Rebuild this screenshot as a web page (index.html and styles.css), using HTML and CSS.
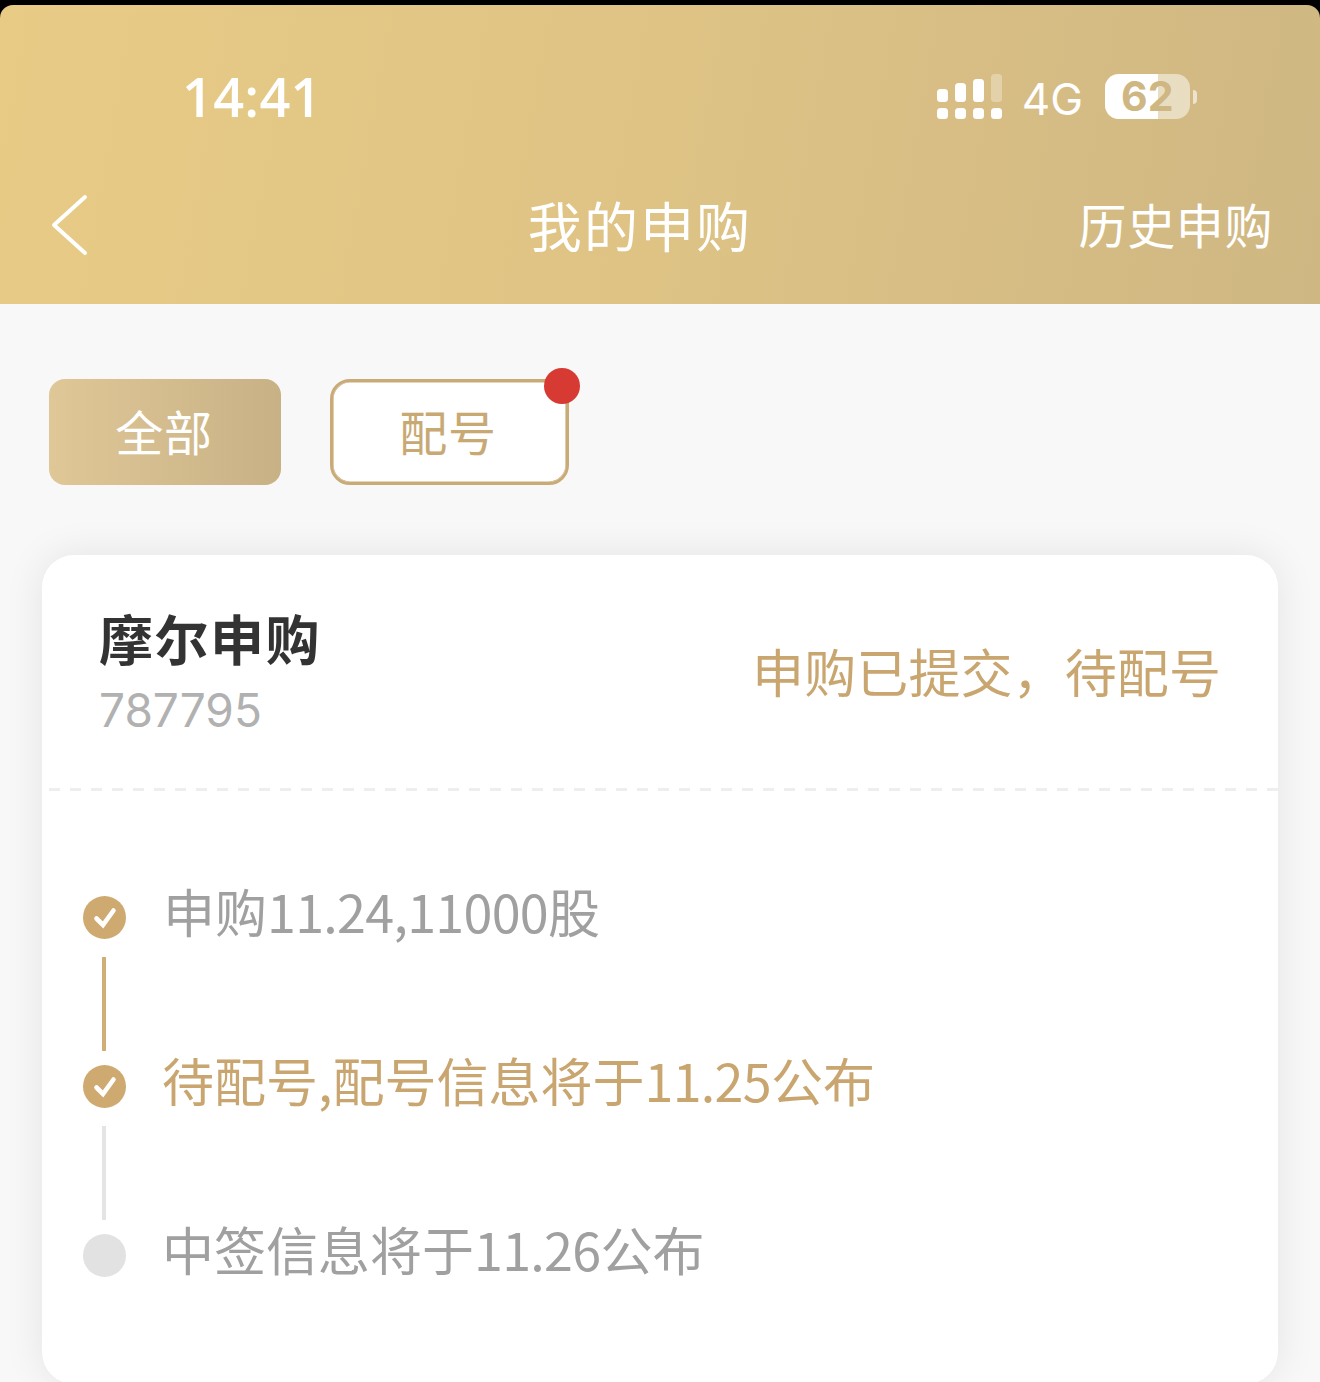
FILE: index.html
```html
<!DOCTYPE html>
<html lang="zh">
<head>
<meta charset="utf-8">
<title>我的申购</title>
<link rel="stylesheet" href="styles.css">
</head>
<body>
<div class="screen">
  <header class="header">
    <div class="status">
      <span class="time">14:41</span>
      <div class="status-right">
        <svg class="signal" width="66" height="46" viewBox="0 0 66 46">
          <g fill="#fff">
            <rect x="0" y="15" width="11" height="13" rx="3.5"/>
            <rect x="18" y="9" width="11" height="19" rx="3.5"/>
            <rect x="36" y="5" width="11" height="23" rx="3.5"/>
            <rect x="54" y="0" width="11" height="28" rx="3.5" opacity=".3"/>
            <rect x="0" y="34" width="11" height="11" rx="3.5"/>
            <rect x="18" y="34" width="11" height="11" rx="3.5"/>
            <rect x="36" y="34" width="11" height="11" rx="3.5"/>
            <rect x="54" y="34" width="11" height="11" rx="3.5"/>
          </g>
        </svg>
        <span class="net">4G</span>
        <div class="battery">
          <div class="battery-body">
            <div class="battery-fill"></div>
            <span class="battery-num">62</span>
          </div>
          <span class="battery-cap"></span>
        </div>
      </div>
    </div>
    <nav class="nav">
      <svg class="back" width="38" height="64" viewBox="0 0 38 64"><path d="M34 3 L3 31 L34 59" fill="none" stroke="#fff" stroke-width="4" stroke-linecap="round" stroke-linejoin="round"/></svg>
      <h1 class="title">我的申购</h1>
      <a class="history">历史申购</a>
    </nav>
  </header>
  <main class="main">
    <div class="tabs">
      <button class="tab tab-active">全部</button>
      <button class="tab tab-outline">配号<span class="dot"></span></button>
    </div>
    <section class="card">
      <div class="card-head">
        <div class="stock">
          <div class="stock-name">摩尔申购</div>
          <div class="stock-code">787795</div>
        </div>
        <div class="stock-state">申购已提交，待配号</div>
      </div>
      <div class="dashes"></div>
      <ol class="steps">
        <li class="step step-gone">
          <span class="mark mark-done"><svg width="43" height="43" viewBox="0 0 43 43"><path d="M13.5 22.5 L20 29 L30.5 14.5" fill="none" stroke="#fff" stroke-width="4.6" stroke-linecap="round" stroke-linejoin="miter"/></svg></span>
          <span class="step-text">申购<span class="num">11.24,11000</span>股</span>
        </li>
        <li class="rail rail-on"></li>
        <li class="step step-now">
          <span class="mark mark-done"><svg width="43" height="43" viewBox="0 0 43 43"><path d="M13.5 22.5 L20 29 L30.5 14.5" fill="none" stroke="#fff" stroke-width="4.6" stroke-linecap="round" stroke-linejoin="miter"/></svg></span>
          <span class="step-text step-shift">待配号,配号信息将于<span class="num">11.25</span>公布</span>
        </li>
        <li class="rail rail-off"></li>
        <li class="step step-gone">
          <span class="mark mark-todo"></span>
          <span class="step-text step-shift">中签信息将于<span class="num">11.26</span>公布</span>
        </li>
      </ol>
    </section>
  </main>
</div>
</body>
</html>
```
FILE: styles.css
```css
* { box-sizing: border-box; margin: 0; padding: 0; }
html, body { width: 1320px; height: 1382px; overflow: hidden; background: #000; }
body { font-family: "Noto Sans CJK SC", "Noto Sans", sans-serif; }
.screen { height: 1382px; padding-top: 5px; background: #000; overflow: hidden; }
.header {
  height: 299px;
  background: linear-gradient(100deg, #e8cb85 0%, #dec385 50%, #cfb783 100%);
  border-radius: 13px 13px 0 0;
  color: #fff;
}
.status { height: 186px; padding: 59px 123px 0 182px; display: flex; justify-content: space-between; align-items: flex-start; }
.time { font-family: "Open Sans", sans-serif; font-size: 54px; font-weight: 600; line-height: 64px; letter-spacing: .3px; }
.status-right { display: flex; align-items: flex-start; padding-top: 10px; }
.signal { margin-right: 19px; }
.net { font-family: "Inter", sans-serif; font-size: 44px; font-weight: 400; line-height: 52px; margin-top: -1px; margin-right: 22px; }
.battery { display: flex; align-items: center; height: 45px; }
.battery-body { position: relative; width: 85px; height: 45px; border-radius: 14px; background: rgba(255,255,255,.5); }
.battery-fill { width: 53px; height: 45px; background: #fff; border-radius: 14px 0 0 14px; }
.battery-num { position: absolute; left: 16px; top: 0; font-family: "Inter", sans-serif; font-size: 41px; font-weight: 700; line-height: 45px; color: #cfb783; }
.battery-cap { width: 4px; height: 14px; margin-left: 3px; background: rgba(255,255,255,.6); border-radius: 0 4px 4px 0; }
.nav { height: 113px; padding: 0 47px 0 51px; display: flex; align-items: flex-start; justify-content: space-between; position: relative; }
.back { margin-top: 3px; }
.title { position: absolute; left: 0; right: 40px; top: -2px; text-align: center; font-size: 54px; font-weight: 400; line-height: 72px; letter-spacing: 2.1px; }
.history { font-size: 48px; line-height: 72px; margin-top: -4px; letter-spacing: .6px; }
.main { height: 1078px; background: #f8f8f9; padding: 75px 42px 0; }
.tabs { display: flex; gap: 49px; padding-left: 7px; margin-bottom: 70px; }
.tab { font-family: inherit; font-size: 48px; height: 106px; border-radius: 16px; border: 0; position: relative; padding-bottom: 5px; letter-spacing: .8px; }
.tab-active { width: 232px; color: #fff; background: linear-gradient(90deg, #dfc797, #c8b185); padding-right: 2px; }
.tab-outline { width: 239px; color: #c8a974; background: #fff; border: 3px solid #c9ab78; border-radius: 20px; padding-right: 3px; box-shadow: inset 0 0 0 .6px #c9ab78; }
.dot { position: absolute; top: -14px; right: -14px; width: 36px; height: 36px; border-radius: 50%; background: #d63a32; }
.card { width: 1236px; height: 829px; background: #fff; border-radius: 32px; box-shadow: 0 0 40px rgba(0,0,0,.085); }
.card-head { height: 233px; padding: 47px 58px 0 56px; display: flex; justify-content: space-between; align-items: flex-start; }
.stock { padding-left: 1px; }
.stock-name { font-size: 54px; font-weight: 700; color: #333; line-height: 72px; letter-spacing: 1.5px; }
.stock-code { font-family: "Inter", sans-serif; font-size: 46px; color: #b1b1b1; line-height: 62px; margin-top: 5px; }
.stock-state { font-size: 52px; color: #c9a670; line-height: 70px; margin-top: 34px; margin-right: -1px; letter-spacing: .1px; }
.dashes { height: 3px; background: linear-gradient(90deg, #eeeeee 11px, transparent 11px) 7px 0 / 21px 3px repeat-x; }
.steps { list-style: none; padding: 86px 0 0 41px; }
.step { display: flex; align-items: flex-start; height: 86px; font-size: 52px; line-height: 72px; }
.mark { flex: none; width: 43px; height: 43px; border-radius: 50%; margin-top: 19px; margin-right: 37px; }
.mark-done { background: #cfaa70; }
.mark-done svg { display: block; }
.mark-todo { background: #e2e2e2; }
.step-text { margin-top: -2px; }
.step-shift { margin-left: -1px; }
.step-gone .step-text { color: #a0a0a0; }
.step-now .step-text { color: #c9a670; }
.num { letter-spacing: -.7px; }
.rail { width: 4px; height: 94px; margin: -6px 0 -5px 19px; }
.rail-on { background: #cfae78; }
.rail-off { background: #e4e4e4; }
```
